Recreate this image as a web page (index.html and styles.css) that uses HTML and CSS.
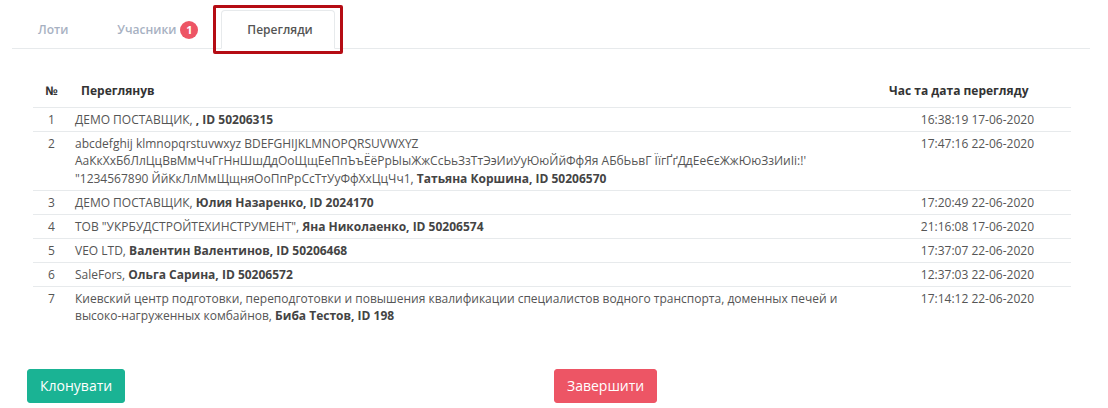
FILE: index.html
```html
<!DOCTYPE html>
<html lang="uk">
<head>
<meta charset="utf-8">
<title>Перегляди</title>
<link rel="stylesheet" href="styles.css">
</head>
<body>
<div class="page">
  <ul class="tabs">
    <li class="tab"><a>Лоти</a></li>
    <li class="tab"><a>Учасники <span class="badge">1</span></a></li>
    <li class="tab active"><a>Перегляди</a></li>
  </ul>
  <div class="highlight"></div>
  <div class="tab-content">
    <table class="views">
      <colgroup>
        <col class="c-num">
        <col class="c-who">
        <col class="c-time">
        <col class="c-empty">
      </colgroup>
      <thead>
        <tr>
          <th class="num">№</th>
          <th>Переглянув</th>
          <th class="time">Час та дата перегляду</th>
          <th></th>
        </tr>
      </thead>
      <tbody>
        <tr>
          <td class="num">1</td>
          <td>ДЕМО ПОСТАВЩИК, <b>, ID 50206315</b></td>
          <td class="time">16:38:19 17-06-2020</td>
          <td></td>
        </tr>
        <tr>
          <td class="num">2</td>
          <td>abcdefghij klmnopqrstuvwxyz BDEFGHIJKLMNOPQRSUVWXYZ<br>АаКкХхБбЛлЦцВвМмЧчГгНнШшДдОоЩщЕеПпЪъЁёРрЫыЖжСсЬьЗзТтЭэИиУуЮюЙйФфЯя АБбЬьвГ ЇїгҐґДдЕеЄєЖжЮюЗзИиІі:!'<br>"1234567890 ЙйКкЛлМмЩщняОоПпРрСсТтУуФфХхЦцЧч1, <b>Татьяна Коршина, ID 50206570</b></td>
          <td class="time">17:47:16 22-06-2020</td>
          <td></td>
        </tr>
        <tr>
          <td class="num">3</td>
          <td>ДЕМО ПОСТАВЩИК, <b>Юлия Назаренко, ID 2024170</b></td>
          <td class="time">17:20:49 22-06-2020</td>
          <td></td>
        </tr>
        <tr>
          <td class="num">4</td>
          <td>ТОВ "УКРБУДСТРОЙТЕХИНСТРУМЕНТ", <b>Яна Николаенко, ID 50206574</b></td>
          <td class="time">21:16:08 17-06-2020</td>
          <td></td>
        </tr>
        <tr>
          <td class="num">5</td>
          <td>VEO LTD, <b>Валентин Валентинов, ID 50206468</b></td>
          <td class="time">17:37:07 22-06-2020</td>
          <td></td>
        </tr>
        <tr>
          <td class="num">6</td>
          <td>SaleFors, <b>Ольга Сарина, ID 50206572</b></td>
          <td class="time">12:37:03 22-06-2020</td>
          <td></td>
        </tr>
        <tr>
          <td class="num">7</td>
          <td>Киевский центр подготовки, переподготовки и повышения квалификации специалистов водного транспорта, доменных печей и<br>высоко-нагруженных комбайнов, <b>Биба Тестов, ID 198</b></td>
          <td class="time">17:14:12 22-06-2020</td>
          <td></td>
        </tr>
      </tbody>
    </table>
  </div>
  <div class="actions">
    <div class="col-left"><button class="btn btn-primary">Клонувати</button></div>
    <div class="col-right"><button class="btn btn-danger">Завершити</button></div>
  </div>
</div>
</body>
</html>
```

FILE: styles.css
```css
* { box-sizing: border-box; }
html, body { margin: 0; padding: 0; background: #fff; }
body {
  font-family: "Open Sans", "Liberation Sans", sans-serif;
  font-size: 12px;
  line-height: 1.42857;
  color: #555;
}
.page {
  position: relative;
  padding-top: 10px;
}
.tabs {
  list-style: none;
  margin: 0 18px 0 12px;
  padding: 0;
  display: flex;
  border-bottom: 1px solid #e7eaec;
}
.tab {
  margin-bottom: -1px;
  margin-right: 3px;
}
.tab a {
  display: flex;
  align-items: center;
  height: 39px;
  padding: 0 19px 0 25px;
  font-size: 12px;
  font-weight: 600;
  color: #a7b1c2;
  border: 1px solid transparent;
  border-radius: 4px 4px 0 0;
}
.tab.active a {
  color: #555;
  background: #fff;
  padding: 0 21px 0 25px;
  border-color: #e7eaec #e7eaec transparent;
}
.badge {
  display: inline-flex;
  align-items: center;
  justify-content: center;
  width: 18px;
  height: 18px;
  margin-left: 4px;
  border-radius: 50%;
  background: #ed5565;
  color: #fff;
  font-size: 11px;
  font-weight: 700;
}
.highlight {
  position: absolute;
  left: 213px;
  top: 5px;
  width: 130px;
  height: 49px;
  border: 3px solid #b50c14;
  border-radius: 2px;
}
.tab-content {
  padding: 25px 37px 0 33px;
}
.views {
  width: 1038px;
  table-layout: fixed;
  border-collapse: collapse;
}
.c-num { width: 37px; }
.c-who { width: 808px; }
.c-time { width: 161px; }
.c-empty { width: 32px; }
.views th {
  padding: 8px 11px;
  text-align: left;
  font-weight: 700;
  color: #333;
  white-space: nowrap;
  border-bottom: 1px solid #e7eaec;
  vertical-align: bottom;
}
.views td {
  padding: 3px 5px;
  vertical-align: top;
  border-top: 1px solid #e7eaec;
}
.views tbody tr:first-child td { border-top: 0; }
.views b { font-weight: 700; color: #444; }
.views .num { text-align: center; padding-left: 0; padding-right: 0; }
.views .time { text-align: right; white-space: nowrap; }
.actions {
  display: grid;
  grid-template-columns: 1fr 1fr;
  margin-top: 41px;
}
.col-left { padding-left: 27px; }
.btn {
  font-family: "Open Sans", "Liberation Sans", sans-serif;
  font-size: 14px;
  line-height: 20px;
  padding: 6px 12px;
  border: 1px solid transparent;
  border-radius: 3px;
  color: #fff;
}
.btn-primary { background: #1ab394; border-color: #1ab394; }
.btn-danger { background: #ed5565; border-color: #ed5565; }
```
